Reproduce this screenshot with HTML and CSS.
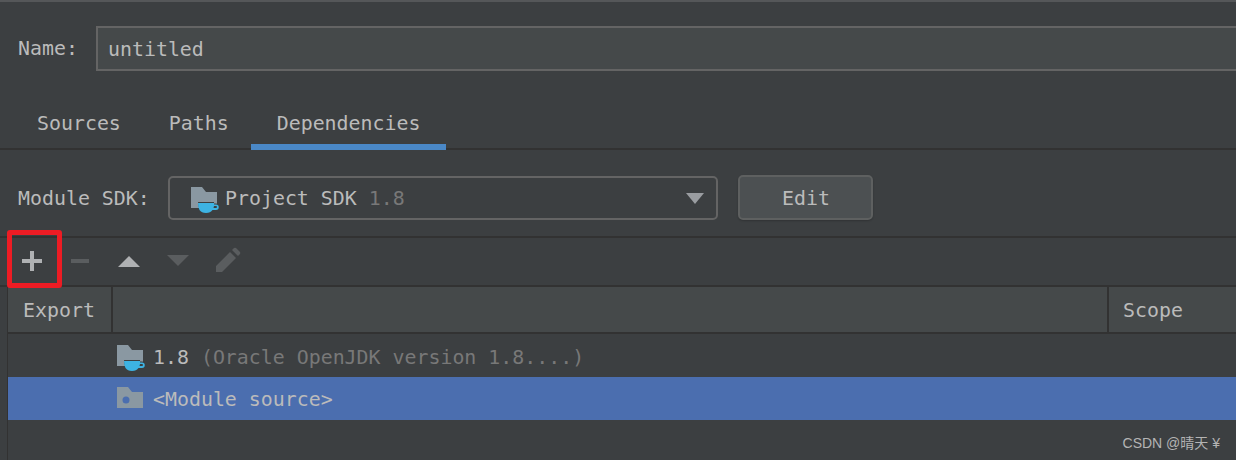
FILE: index.html
```html
<!DOCTYPE html>
<html lang="en">
<head>
    <meta charset="UTF-8">
    <meta name="viewport" content="width=device-width, initial-scale=1.0">
    <title>Module Dependencies</title>
    <link rel="stylesheet" href="styles.css">
</head>
<body>

<svg class="defs" width="0" height="0">
    <symbol id="folder" viewBox="0 0 26 21">
        <path d="M0 0h11l4 5h11v16H0z" fill="#8a98a2"/>
    </symbol>
    <symbol id="cup" viewBox="0 0 21 10">
        <path d="M0 0h16v1.500h2a2.500 2.500 0 0 1 0 5.500h-3.500q-2 3-6.500 3T1.500 7Q0 4.500 0 0z" fill="#3db3e3"/>
        <path d="M16 3h2a1 1 0 0 1 0 2h-2.500z" fill="#3c3f41"/>
    </symbol>
</svg>

<div class="window">
    <div class="name-row">
        <label class="field-label">Name:</label>
        <div class="name-input">untitled</div>
    </div>

    <div class="tabs">
        <div class="tab">Sources</div>
        <div class="tab">Paths</div>
        <div class="tab active">Dependencies</div>
    </div>

    <div class="sdk-row">
        <label class="field-label">Module SDK:</label>
        <div class="combo">
            <span class="sdk-icon">
                <svg class="folder-icon"><use href="#folder"/></svg>
                <svg class="cup-icon"><use href="#cup"/></svg>
            </span>
            <span class="combo-text">Project SDK <span class="muted">1.8</span></span>
            <span class="combo-arrow"></span>
        </div>
        <div class="button">Edit</div>
    </div>

    <div class="panel">
        <div class="toolbar">
            <svg class="tool" viewBox="0 0 24 24"><path d="M10 2h4v8h8v4h-8v8h-4v-8H2v-4h8z" fill="#afb1b3"/></svg>
            <svg class="tool" viewBox="0 0 24 24"><path d="M2 10h18v4H2z" fill="#5a5d5f"/></svg>
            <svg class="tool" viewBox="0 0 24 24"><path d="M11 7l11 11H0z" fill="#afb1b3"/></svg>
            <svg class="tool" viewBox="0 0 24 24"><path d="M0 6h22L11 17z" fill="#5a5d5f"/></svg>
            <svg class="tool" viewBox="0 0 24 24"><path d="M16 1l2-2q1-.5 2 0l4 4q.5 1 0 2l-2 2zM14 3l6 6L6 23H0v-6z" fill="#5a5d5f"/></svg>
        </div>

        <div class="table">
            <div class="table-head">
                <div class="col-export">Export</div>
                <div class="col-main"></div>
                <div class="col-scope">Scope</div>
            </div>
            <div class="table-row">
                <span class="sdk-icon">
                    <svg class="folder-icon"><use href="#folder"/></svg>
                    <svg class="cup-icon"><use href="#cup"/></svg>
                </span>
                <span class="row-text">1.8 <span class="muted">(Oracle OpenJDK version 1.8....)</span></span>
            </div>
            <div class="table-row selected">
                <svg class="source-icon" viewBox="0 0 26 21">
                    <path d="M0 0h11l4 5h11v16H0z" fill="#8a98a2"/>
                    <circle cx="9" cy="13" r="3.500" fill="#4b6eaf"/>
                </svg>
                <span class="row-text">&lt;Module source&gt;</span>
            </div>
        </div>
    </div>
</div>

<div class="red-box"></div>
<div class="watermark">CSDN @晴天 ¥</div>

</body>
</html>
```

FILE: styles.css
```css
/* Global styles */
* {
    margin: 0;
    padding: 0;
    box-sizing: border-box;
}

body {
    width: 1236px;
    height: 460px;
    overflow: hidden;
    position: relative;
    background: #3c3f41;
    color: #bbbbbb;
    font-family: 'DejaVu Sans Mono', monospace;
    font-size: 19.9px;
}

.defs {
    position: absolute;
}

.window {
    display: flex;
    flex-direction: column;
    height: 100%;
    border-top: 2px solid #555759;
}

.field-label {
    color: #bbbbbb;
}

.muted {
    color: #787878;
}

/* Name field */
.name-row {
    display: flex;
    align-items: center;
    padding: 24px 0 0 18px;
}

.name-row .field-label {
    width: 78px;
}

.name-input {
    flex: 1;
    height: 45px;
    line-height: 43px;
    padding-left: 10px;
    background: #45494a;
    border: 2px solid #646464;
    border-right: none;
}

/* Tabs */
.tabs {
    display: flex;
    height: 79px;
    padding-left: 13px;
    align-items: flex-end;
    border-bottom: 2px solid #323232;
}

.tab {
    height: 46px;
    padding: 0 24px;
    line-height: 40px;
    margin-bottom: -2px;
}

.tab.active {
    margin-left: -2px;
    padding: 0 26px;
    border-bottom: 6px solid #4a88c7;
}

/* SDK row */
.sdk-row {
    display: flex;
    align-items: center;
    padding: 25px 0 0 18px;
}

.sdk-row .field-label {
    width: 150px;
    padding-top: 2px;
}

.combo {
    width: 550px;
    height: 44px;
    display: flex;
    align-items: center;
    padding: 0 12px 0 21px;
    border: 2px solid #646464;
    border-radius: 5px;
}

.combo-text {
    flex: 1;
    margin-left: 8px;
    padding-top: 2px;
}

.combo-arrow {
    width: 0;
    height: 0;
    margin-top: 2px;
    border-left: 9px solid transparent;
    border-right: 9px solid transparent;
    border-top: 11px solid #9a9da1;
}

.button {
    width: 135px;
    height: 45px;
    margin-left: 20px;
    padding-left: 1px;
    line-height: 43px;
    text-align: center;
    background: #4c5052;
    border: 2px solid #5e6060;
    border-radius: 5px;
    box-shadow: 0 1px 2px rgba(0, 0, 0, 0.2);
}

/* Icons */
.sdk-icon {
    position: relative;
    display: block;
    width: 26px;
    height: 26px;
    flex: none;
}

.folder-icon {
    display: block;
    width: 26px;
    height: 21px;
    margin-top: 2px;
}

.cup-icon {
    position: absolute;
    left: 7px;
    top: 18px;
    width: 21px;
    height: 10px;
    overflow: visible;
    filter: drop-shadow(0 -1px 0 #3c3f41);
}

.source-icon {
    width: 26px;
    height: 21px;
    margin-bottom: 2px;
    flex: none;
}

/* Toolbar and table */
.panel {
    flex: 1;
    margin: 16px 0 0 7px;
    border-left: 1px solid #323232;
}

.toolbar {
    height: 51px;
    display: flex;
    align-items: center;
    margin-left: -8px;
    padding: 0 0 2px 20px;
    gap: 25px;
    border-top: 2px solid #323232;
    border-bottom: 2px solid #323232;
}

.tool {
    width: 24px;
    height: 24px;
    flex: none;
    overflow: visible;
}

.table-head {
    height: 47px;
    display: flex;
    background: #45494a;
    border-bottom: 2px solid #323232;
    line-height: 47px;
}

.col-export {
    width: 105px;
    padding-left: 15px;
    border-right: 2px solid #323232;
}

.col-main {
    width: 996px;
    border-right: 2px solid #323232;
}

.col-scope {
    padding-left: 14px;
}

.table-row {
    height: 43px;
    display: flex;
    align-items: center;
    padding-left: 109px;
}

.table-row:nth-child(2) {
    height: 42px;
    margin-top: 1px;
}

.table-row.selected {
    background: #4b6eaf;
}

.row-text {
    margin-left: 10px;
    padding-top: 2px;
}

/* Overlays */
.red-box {
    position: absolute;
    left: 7px;
    top: 230px;
    width: 55px;
    height: 58px;
    border: 5px solid #ed1c24;
    border-radius: 3px;
}

.watermark {
    position: absolute;
    right: 16px;
    top: 432px;
    font-family: 'Liberation Sans', 'Noto Sans CJK SC', sans-serif;
    font-size: 14px;
    color: #b4b4b4;
}
```
